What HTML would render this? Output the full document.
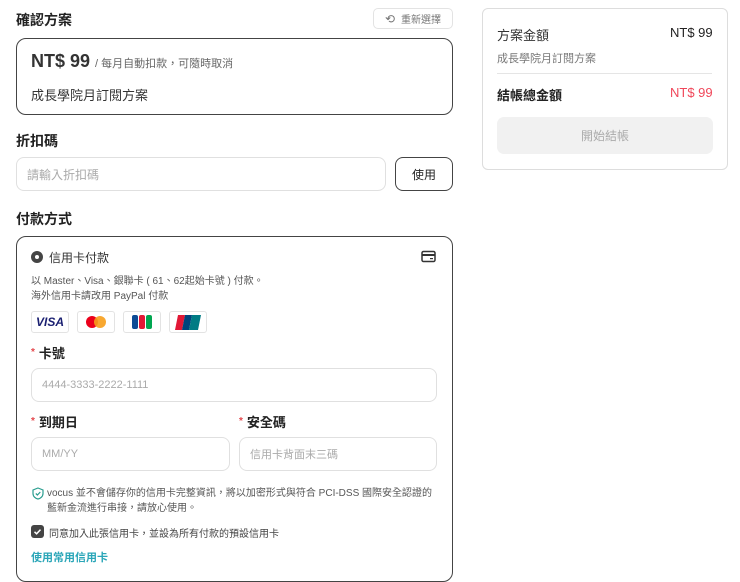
<!DOCTYPE html>
<html><head><meta charset="utf-8"><style>
*{box-sizing:border-box;margin:0;padding:0}
body{width:740px;height:582px;background:#fff;font-family:"Liberation Sans","Noto Sans CJK TC",sans-serif;color:#333;position:relative;overflow:hidden}
.a{position:absolute;white-space:nowrap}
.h{font-size:14px;font-weight:bold;color:#222}
.box{position:absolute;border:1px solid #444;border-radius:10px}
.inp{position:absolute;border:1px solid #e0e0e0;border-radius:8px;font-size:11px;color:#aaa;padding-left:10px;display:flex;align-items:center}
.lbl{font-size:13px;font-weight:bold;color:#222;line-height:16px}
.lbl b{color:#e5484d;font-size:10px;position:relative;top:-3px;margin-right:4px}
.logo{position:absolute;top:311px;width:38px;height:22px;border:1px solid #e3e3e3;border-radius:3px;display:flex;align-items:center;justify-content:center}
.s{font-size:10px;color:#555}
</style></head><body>
<div class="a h" style="left:16px;top:10px">確認方案</div>
<div class="a" style="left:373px;top:8px;width:80px;height:21px;border:1px solid #e3e3e3;border-radius:5px;font-size:10px;color:#777;display:flex;align-items:center;justify-content:center;gap:6px"><span style="font-size:12px">⟲</span>重新選擇</div>
<div class="box" style="left:16px;top:38px;width:437px;height:77px"></div>
<div class="a" style="left:31px;top:51px;font-size:18px;font-weight:bold;color:#333">NT$ 99 <span style="font-size:11px;font-weight:normal;color:#666">/ 每月自動扣款，可隨時取消</span></div>
<div class="a" style="left:31px;top:85px;font-size:13px;color:#333">成長學院月訂閱方案</div>
<div class="a h" style="left:16px;top:131px">折扣碼</div>
<div class="inp" style="left:16px;top:157px;width:370px;height:34px;font-size:12px">請輸入折扣碼</div>
<div class="a" style="left:395px;top:157px;width:58px;height:34px;border:1px solid #444;border-radius:8px;font-size:12px;color:#222;display:flex;align-items:center;justify-content:center">使用</div>
<div class="a h" style="left:16px;top:209px">付款方式</div>
<div class="box" style="left:16px;top:236px;width:437px;height:346px"></div>
<div class="a" style="left:31px;top:251px;width:12px;height:12px;border-radius:50%;background:#444"><div style="position:absolute;left:4px;top:4px;width:4px;height:4px;border-radius:50%;background:#fff"></div></div>
<div class="a" style="left:49px;top:249px;font-size:12px;color:#333">信用卡付款</div>
<svg class="a" style="left:421px;top:250px" width="15" height="13" viewBox="0 0 15 13"><rect x="1" y="1.5" width="13" height="10" rx="1.5" fill="none" stroke="#333" stroke-width="1.5"/><rect x="1" y="4" width="13" height="2" fill="#333"/><rect x="9" y="8" width="3" height="1.2" fill="#333"/></svg>
<div class="a s" style="left:31px;top:272px">以 Master、Visa、銀聯卡 ( 61、62起始卡號 ) 付款。</div>
<div class="a s" style="left:31px;top:287px">海外信用卡請改用 PayPal 付款</div>
<div class="logo" style="left:31px"><span style="font:italic bold 12px 'Liberation Sans';color:#1a1f71">VISA</span></div>
<div class="logo" style="left:77px"><svg width="22" height="14"><circle cx="7" cy="7" r="6" fill="#eb001b"/><circle cx="15" cy="7" r="6" fill="#f79e1b" opacity=".9"/></svg></div>
<div class="logo" style="left:123px"><svg width="20" height="14"><rect x="0" y="0" width="6" height="14" rx="2" fill="#0e4c96"/><rect x="7" y="0" width="6" height="14" rx="2" fill="#e21836"/><rect x="14" y="0" width="6" height="14" rx="2" fill="#00a650"/></svg></div>
<div class="logo" style="left:169px"><svg width="26" height="15"><path d="M3 0h7l-3 15H0z" fill="#e21836"/><path d="M10 0h7l-3 15H7z" fill="#00447c"/><path d="M17 0h9l-3 15h-9z" fill="#007b84"/></svg></div>
<div class="a lbl" style="left:31px;top:346px"><b>*</b>卡號</div>
<div class="inp" style="left:31px;top:368px;width:406px;height:34px">4444-3333-2222-1111</div>
<div class="a lbl" style="left:31px;top:415px"><b>*</b>到期日</div>
<div class="inp" style="left:31px;top:437px;width:199px;height:34px">MM/YY</div>
<div class="a lbl" style="left:239px;top:415px"><b>*</b>安全碼</div>
<div class="inp" style="left:239px;top:437px;width:198px;height:34px">信用卡背面末三碼</div>
<svg class="a" style="left:32px;top:487px" width="12" height="13" viewBox="0 0 12 13"><path d="M6 1 L11 3 V6.5 C11 9.5 8.5 11.5 6 12 C3.5 11.5 1 9.5 1 6.5 V3 Z" fill="none" stroke="#2a9d8f" stroke-width="1.2"/><path d="M3.8 6.5 L5.4 8 L8.3 5" fill="none" stroke="#2a9d8f" stroke-width="1.2"/></svg>
<div class="a s" style="left:47px;top:486px;line-height:15px">vocus 並不會儲存你的信用卡完整資訊，將以加密形式與符合 PCI-DSS 國際安全認證的<br>藍新金流進行串接，請放心使用。</div>
<div class="a" style="left:31px;top:525px;width:13px;height:13px;border-radius:3px;background:#444"><svg width="13" height="13"><path d="M3.5 6.8 L5.6 8.8 L9.5 4.6" fill="none" stroke="#fff" stroke-width="1.5"/></svg></div>
<div class="a s" style="left:49px;top:525px;color:#444">同意加入此張信用卡，並設為所有付款的預設信用卡</div>
<div class="a" style="left:31px;top:549px;font-size:11px;font-weight:bold;color:#2aa6b8">使用常用信用卡</div>
<div class="a" style="left:482px;top:8px;width:246px;height:162px;border:1px solid #ddd;border-radius:6px"></div>
<div class="a" style="left:497px;top:25px;font-size:13px;color:#333">方案金額</div>
<div class="a" style="left:670px;top:25px;font-size:13px;color:#222">NT$ 99</div>
<div class="a" style="left:497px;top:50px;font-size:11px;color:#777">成長學院月訂閱方案</div>
<div class="a" style="left:497px;top:73px;width:215px;height:1px;background:#e5e5e5"></div>
<div class="a" style="left:497px;top:85px;font-size:13px;font-weight:bold;color:#222">結帳總金額</div>
<div class="a" style="left:670px;top:85px;font-size:13px;color:#f0475a">NT$ 99</div>
<div class="a" style="left:497px;top:117px;width:216px;height:37px;background:#f1f1f1;border-radius:7px;font-size:12px;color:#aaa;display:flex;align-items:center;justify-content:center">開始結帳</div>
</body></html>
